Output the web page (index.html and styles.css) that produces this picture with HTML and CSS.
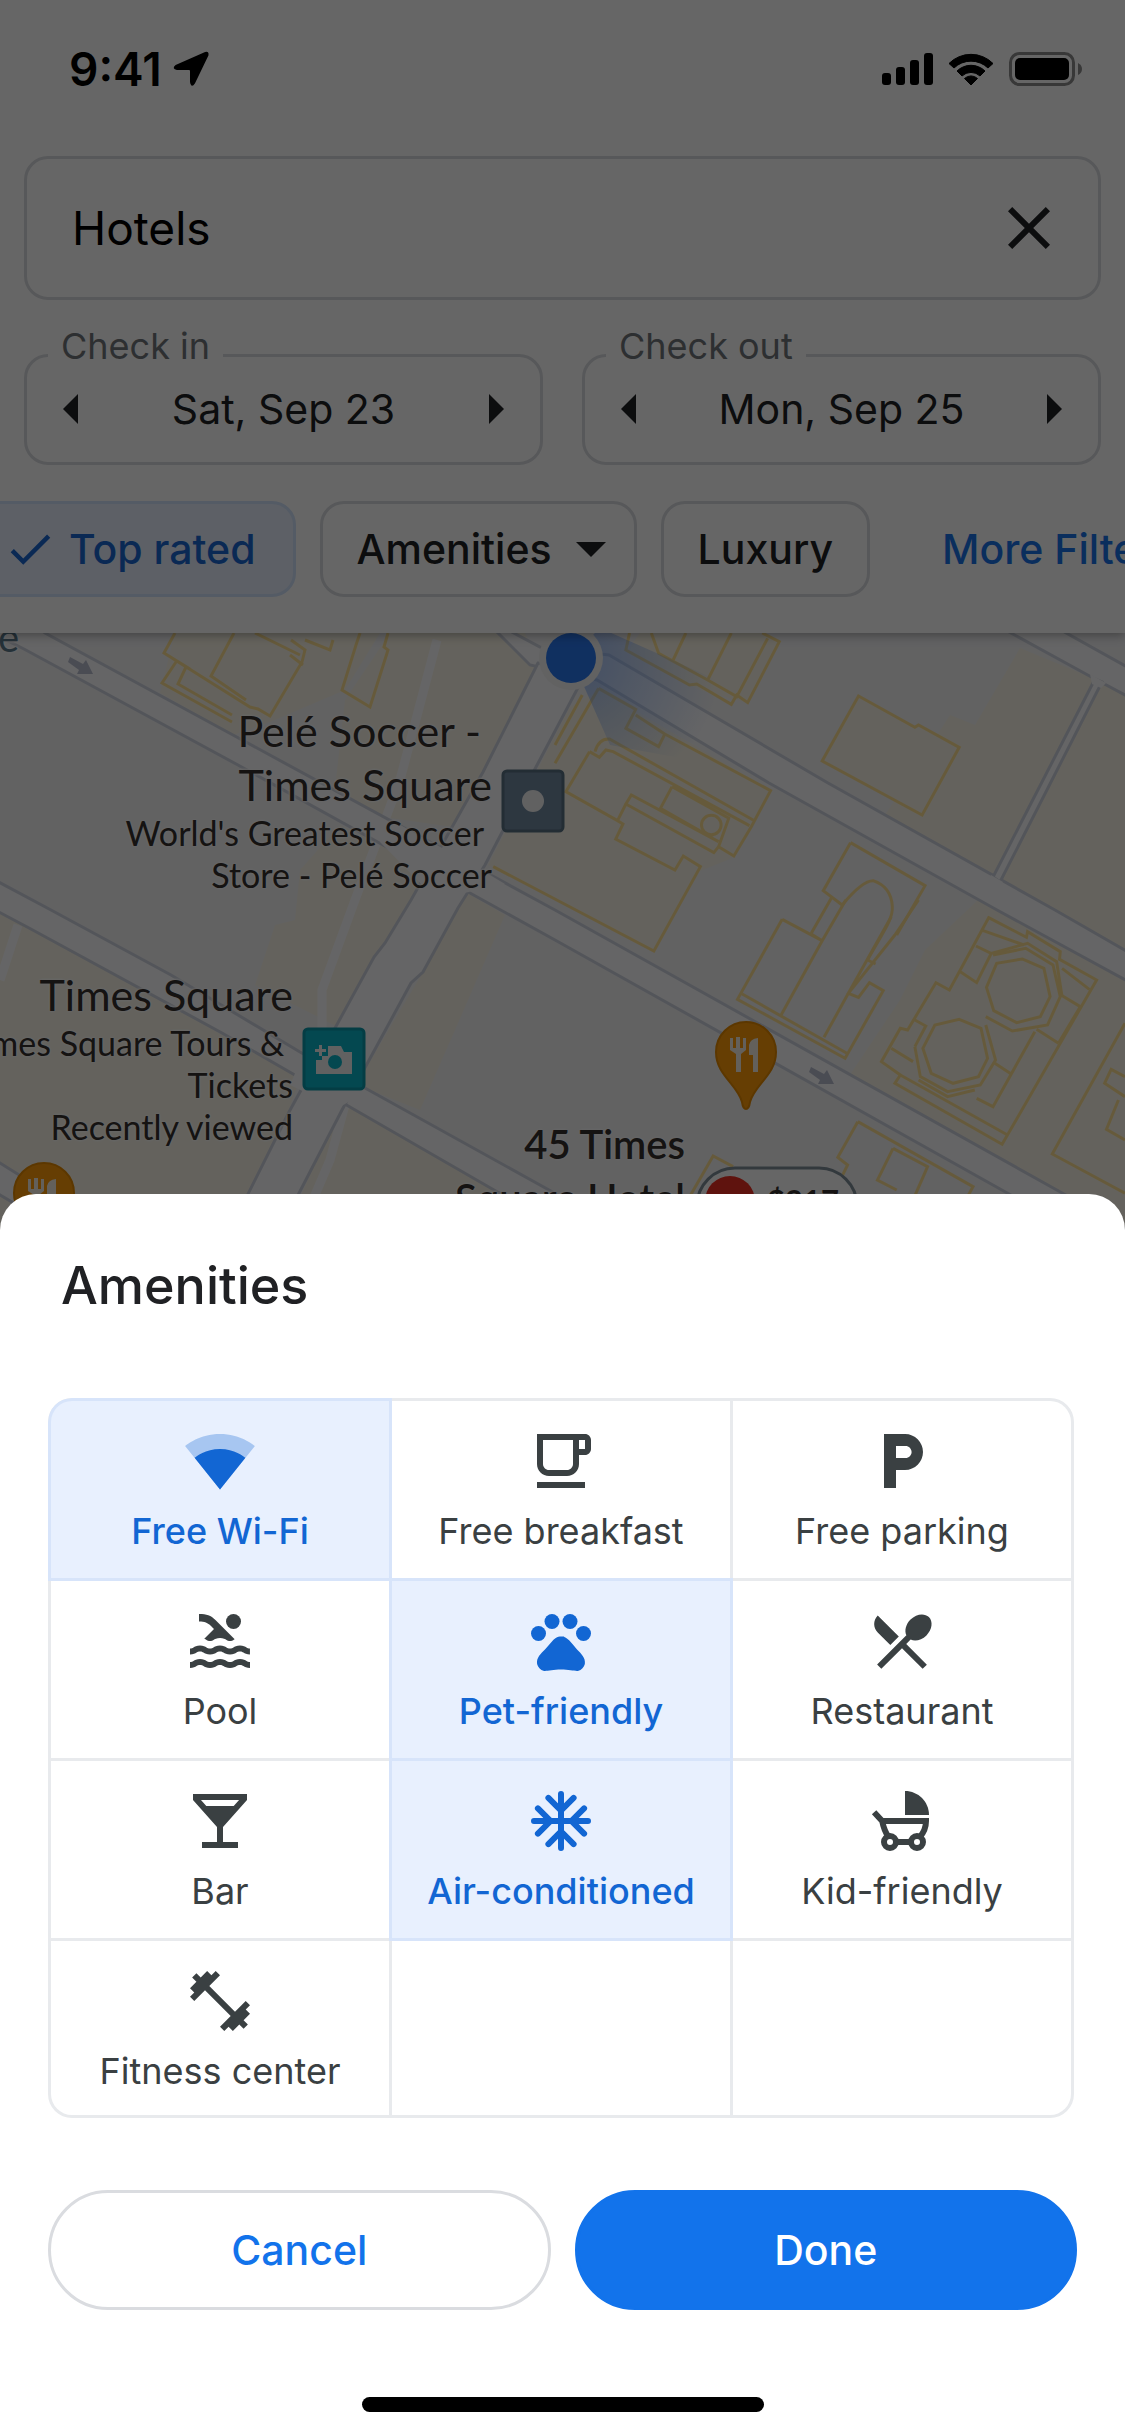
FILE: index.html
```html
<!DOCTYPE html>
<html lang="en">
<head>
<meta charset="utf-8">
<meta name="viewport" content="width=device-width, initial-scale=1">
<title>Hotels – Amenities</title>
<link rel="stylesheet" href="styles.css">
</head>
<body>
<div class="screen">
  <div class="backdrop">
    <header class="header">
      <div class="status">
        <div class="status-time">
          <span>9:41</span>
          <svg class="status-arrow" viewBox="0 0 36 36"><path stroke="#000" stroke-width="2" stroke-linejoin="round" d="M32.500 2Q35 1 34.500 4L21 32Q18.500 36 18 31V20Q18 18 16 18H4Q0 17.500 3 15Z"/></svg>
        </div>
        <div class="status-icons">
          <svg width="51" height="34" viewBox="0 0 51 34"><rect y="21" width="9" height="12" rx="3"/><rect x="14" y="15" width="9" height="18" rx="3"/><rect x="28" y="8" width="9" height="25" rx="3"/><rect x="42" y="1" width="9" height="32" rx="3"/></svg>
          <svg width="46" height="34" viewBox="0 0 46 34"><path d="M1 11.500A31 31 0 0 1 45 11.500L40 16A24.500 24.500 0 0 0 6 16ZM9 19A20 20 0 0 1 37 19L32 24A13 13 0 0 0 14 24ZM16.500 26.500A9.500 9.500 0 0 1 29.500 26.500L23 33Z" stroke="#000" stroke-linejoin="round"/></svg>
          <svg width="74" height="34" viewBox="0 0 74 34"><rect x="1.500" y="1.500" width="63" height="31" rx="9" fill="none" stroke="#000" stroke-opacity=".45" stroke-width="3"/><rect x="6" y="6" width="54" height="22" rx="5"/><path d="M69 11Q73 13 73 17T69 23Z" opacity=".45"/></svg>
        </div>
      </div>

      <form class="search">
        <input class="search-input" type="text" value="Hotels" aria-label="Search">
        <button class="plain" type="button" aria-label="Clear search">
          <svg class="icon" viewBox="0 0 24 24"><path d="M19 6.410L17.590 5 12 10.590 6.410 5 5 6.410 10.590 12 5 17.590 6.410 19 12 13.410 17.590 19 19 17.590 13.410 12z"/></svg>
        </button>
      </form>

      <div class="dates">
        <fieldset class="date">
          <legend>Check in</legend>
          <div class="date-row">
            <button class="plain" type="button" aria-label="Previous check-in day"><svg class="tri" viewBox="0 0 15 30"><path d="M15 0V30L0 15Z"/></svg></button>
            <span>Sat, Sep 23</span>
            <button class="plain" type="button" aria-label="Next check-in day"><svg class="tri" viewBox="0 0 15 30"><path d="M0 0V30L15 15Z"/></svg></button>
          </div>
        </fieldset>
        <fieldset class="date">
          <legend>Check out</legend>
          <div class="date-row">
            <button class="plain" type="button" aria-label="Previous check-out day"><svg class="tri" viewBox="0 0 15 30"><path d="M15 0V30L0 15Z"/></svg></button>
            <span>Mon, Sep 25</span>
            <button class="plain" type="button" aria-label="Next check-out day"><svg class="tri" viewBox="0 0 15 30"><path d="M0 0V30L15 15Z"/></svg></button>
          </div>
        </fieldset>
      </div>

      <div class="chips">
        <button class="chip chip-on" type="button"><svg class="chip-check" viewBox="0 0 24 24"><path d="M9 16.170L4.830 12l-1.420 1.410L9 19 21 7l-1.410-1.410z"/></svg>Top rated</button>
        <button class="chip chip-menu" type="button">Amenities<svg class="chip-caret" viewBox="0 0 30 15"><path d="M0 0H30L15 15Z"/></svg></button>
        <button class="chip" type="button">Luxury</button>
        <a class="more" href="#filters">More Filters</a>
      </div>
    </header>

    <div class="map">
      <svg class="map-art" viewBox="0 633 1125 597" preserveAspectRatio="xMidYMin slice" aria-hidden="true">
        <defs>
          <radialGradient id="beam" gradientUnits="userSpaceOnUse" cx="571" cy="657" r="150">
            <stop offset="0" stop-color="#5b93f5" stop-opacity=".55"/>
            <stop offset="1" stop-color="#5b93f5" stop-opacity="0"/>
          </radialGradient>
        </defs>
        <rect y="633" width="1125" height="597" fill="#f4f4f6"/>
        <!-- commercial areas -->
        <g fill="#fbf6e8">
          <path d="M1102 682L1125 695V950L1000 882ZM1020 648L1095 679 993 877 885 815 950 715 975 725ZM390 633H525L538 663 453 827 383 817 335 788 345 700ZM340 825L427 868 411 900 338 1027 255 985 275 925 295 920 300 870ZM0 912L300 1078 247 1230H0ZM467 893L505 915 455 1030 420 1110 365 1088V1070L423 972ZM343 1103L494 1190 550 1230H285ZM978 900L1125 980V1230H1100L850 1075 900 1000 925 950Z"/>
          <path d="M175 633H380L345 690 270 722 233 735 160 693ZM0 633H20L0 625Z"/>
          <path d="M640 633H760L780 642 748 703 700 690 626 652ZM600 690L770 790 735 857 700 871 654 951 488 865 570 707Z"/>
        </g>
        <!-- footpaths -->
        <g fill="none" stroke="#fdfdff" stroke-width="9">
          <path d="M437 640L400 780 355 900 322 990V1030M18 925L0 980M345 1105L330 1160 300 1230"/>
        </g>
        <!-- streets -->
        <g fill="#fcfcfe" stroke="#d0d5e0" stroke-width="3">
          <path d="M0 600L45 633 233 735 555 910 1064 1194 1150 1242 1090 1239 1009 1194 555 940 238 765 24 649 -10 632Z"/>
          <path d="M480 615L540 647 609 655 828 783 1055 910 1140 959V988L997 910 769 783 597 680 530 665Z"/>
          <path d="M1050 624L1140 674V703L1095 679 1000 627Z"/>
          <path d="M1095 679L993 877 1000 882 1102 682Z"/>
          <path d="M-5 880L51 910 171 975 300 1052 365 1088 549 1190 620 1230H565L494 1190 343 1103 300 1078 222 1033 29 928 -5 910Z"/>
          <path d="M-5 1160L16 1173 110 1230H60L-5 1192Z"/>
          <path d="M538 663L483 772 411 900 385 943 374 957 289 1112 230 1230H280L342 1110 411 983 423 972 458 908 485 865 536 767 590 665Z"/>
        </g>
        <!-- junctions -->
        <g fill="#fcfcfe">
          <path d="M395 822L420 836 470 863 505 884 455 895 425 888 380 842ZM305 1050L350 1078 366 1092 338 1108 290 1085ZM536 650L600 655 600 678 545 680ZM1090 674L1106 683 1101 688 1092 684ZM991 875L1003 882 999 887 989 880Z"/>
        </g>
        <!-- building outlines -->
        <g fill="none" stroke="#ffe294" stroke-width="3">
          <path d="M175 633L164 653 250 707 258 709 270 716 302 662 305 650 291 640M234 633L211 676 246 700M176 662L162 683 232 722M186 667L178 684 232 715M164 653L190 669M255 633L300 655M290 655L303 665M305 640L330 650 333 640M360 633L356 645 342 690 370 707 388 650 384 647 388 633"/>
          <g transform="translate(555 620) scale(.3635 .3333)">
            <path vector-effect="non-scaling-stroke" d="M205 39L195 90 370 195 390 192 485 253 500 225 530 248 617 65 570 39M265 39L285 100 420 180 500 230 585 55M360 39L325 120M485 39L420 180"/>
            <path vector-effect="non-scaling-stroke" d="M835 228L990 322 1000 315 1112 382 1010 585 735 423Z" fill="#fbf6e8"/>
            <path vector-effect="non-scaling-stroke" d="M120 205L222 268 195 325 285 380 302 342 593 512 540 620 492 708 450 680 437 698 195 552 210 525 450 665M222 285L302 342M120 205L0 430M75 225L0 375M110 395Q120 355 150 357L545 600M95 395L122 412 140 390 160 395 535 617M95 395L30 515 172 602 187 612 167 657 330 750 353 708 400 740 272 993 -170 740M195 552L172 602M322 500L290 565 435 655M322 500L478 595 450 680"/>
            <ellipse vector-effect="non-scaling-stroke" cx="430" cy="615" rx="27" ry="29"/>
            <path vector-effect="non-scaling-stroke" d="M813 668L1018 797 940 945M813 668L738 812 790 855M760 835L705 940M790 855Q845 782 875 782 925 800 928 860C930 900 900 940 860 1020"/>
          </g>
          <g transform="translate(555 900) scale(.3635 .3333)">
            <path vector-effect="non-scaling-stroke" d="M625 58L735 122 800 0M625 58L502 298 798 475 903 272 865 248 835 292 807 280 935 105 1000 0M515 282L803 460M735 122L622 345M705 102L735 122M740 412L807 280 925 50M860 180L882 192"/>
            <path vector-effect="non-scaling-stroke" d="M1193 53L1297 112 1300 95 1390 155 1388 178 1490 240 1230 733 935 550 950 525 898 485 950 385 970 390 1048 248 1085 270ZM1178 92L1290 135M1158 138L1200 160 1160 248 1115 215M1395 205L1470 268M1392 285L1445 320M1325 388L1385 430M1385 430L1445 320M1210 490L1252 520M1320 395L1205 620 1160 595M925 445L985 485M990 360L1020 378 990 440M950 525L1245 705"/>
            <path vector-effect="non-scaling-stroke" d="M1285 177L1345 205 1362 290 1335 350 1270 368 1207 332 1187 262 1215 190ZM1205 165L1295 145 1370 195 1390 290 1355 375 1258 393 1185 350M1200 160L1300 130 1380 185 1395 290"/>
            <path vector-effect="non-scaling-stroke" d="M1112 358L1172 385 1190 475 1165 530 1095 550 1035 520 1012 445 1045 375ZM1185 375L1212 480 1170 555 1080 575 1005 530 990 440M1155 570L1080 590 1000 540"/>
            <path vector-effect="non-scaling-stroke" d="M1568 370L1368 762 1568 880M1568 530L1530 508 1512 550 1568 590M1550 600L1517 688 1568 720M833 665L1150 860 1130 900M833 665L778 772 805 795 780 850M930 745L1025 800 985 900M930 745L887 840 940 870M360 910L435 768 490 800"/>
          </g>
        </g>
        <!-- one-way arrows -->
        <path id="oneway" d="M70 657L83 664 86 660 93 674 77 674 79 670 68 662Z" fill="#b9bed0"/>
        <use href="#oneway" x="741" y="410"/>
        <!-- current location -->
        <path d="M571 657L600 628 740 690 690 760 610 745Z" fill="url(#beam)"/>
        <circle cx="571" cy="658" r="32" fill="#f4f4f4"/>
        <circle cx="571" cy="658" r="25" fill="#2a78f0"/>
        <!-- place markers -->
        <rect x="503" y="771" width="60" height="60" rx="4" fill="#7089a0" stroke="#587183" stroke-width="3"/>
        <circle cx="533" cy="801" r="11" fill="#f2f2f2"/>
        <rect x="304" y="1029" width="60" height="60" rx="4" fill="#0cb4c8" stroke="#0a98aa" stroke-width="3"/>
        <path d="M328 1046H341L344 1052H352V1074H316V1060H322V1056H328ZM319 1045H322V1049H326V1052H322V1056H319V1052H315V1049H319Z" fill="#f2f2f2"/>
        <circle cx="335" cy="1062" r="7" fill="#0cb4c8"/>
        <g id="food">
          <path d="M746 1109Q743 1109 742 1102C737 1084 716 1075 716 1052A30 30 0 0 1 776 1052C776 1075 755 1084 750 1102Q749 1109 746 1109Z" fill="#ff9c08" stroke="#e58a00" stroke-width="2"/>
          <path d="M730 1038H733V1048H736V1037H740V1048H743V1038H746V1050L741 1054V1072H736V1054L730 1050ZM758 1038V1072H753V1055H749V1045Q750 1039 758 1038Z" fill="#f7f0e4"/>
        </g>
        <use href="#food" x="-702" y="141"/>
        <rect x="697" y="1168" width="160" height="76" rx="38" fill="#fff" stroke="#80909a" stroke-width="3"/>
        <circle cx="730" cy="1201" r="25" fill="#ee3124"/>
      </svg>
      <span class="place street">e</span>
      <div class="place place-pele"><b>Pelé Soccer -&nbsp;<br>Times Square</b><span>World's Greatest Soccer&nbsp;<br>Store - Pelé Soccer</span></div>
      <div class="place place-times"><b>Times Square</b><span>Times Square Tours &amp;&nbsp;<br>Tickets<br>Recently viewed</span></div>
      <div class="place place-hotel">45 Times<br>Square Hotel</div>
      <span class="place price">$217</span>
    </div>
  </div>

  <main class="sheet">
    <h1 class="title">Amenities</h1>
    <form>
      <div class="grid">
        <label class="cell"><input type="checkbox" checked><svg class="icon" viewBox="0 0 24 24"><path opacity=".3" d="M12.010 21.490L23.640 7c-.45-.34-4.930-4-11.640-4C5.280 3 .81 6.660.36 7l11.630 14.490.01.01.01-.01z"/><path d="M3.530 10.950l8.460 10.540.01.01.01-.01 8.460-10.540C20.040 10.620 16.810 8 12 8c-4.810 0-8.040 2.620-8.470 2.950z"/></svg><span>Free Wi-Fi</span></label>
        <label class="cell"><input type="checkbox"><svg class="icon" viewBox="0 0 24 24"><path fill-rule="evenodd" d="M4 3H20C21.110 3 22 3.890 22 5V8C22 9.100 21.110 10 20 10H18V13C18 15.210 16.210 17 14 17H8C5.790 17 4 15.210 4 13ZM6 5V13C6 14.100 6.900 15 8 15H14C15.100 15 16 14.100 16 13V5ZM18 5V8H20V5ZM4 19H20V21H4Z"/></svg><span>Free breakfast</span></label>
        <label class="cell"><input type="checkbox"><svg class="icon" viewBox="0 0 24 24"><path d="M13 3H6v18h4v-6h3c3.310 0 6-2.690 6-6s-2.690-6-6-6zm.2 8H10V7h3.200c1.100 0 2 .9 2 2s-.9 2-2 2z"/></svg><span>Free parking</span></label>
        <label class="cell"><input type="checkbox"><svg class="icon" viewBox="0 0 24 24"><path d="M22 21c-1.110 0-1.730-.37-2.180-.64-.37-.22-.6-.36-1.150-.36-.56 0-.78.13-1.150.36-.46.27-1.070.64-2.180.64s-1.730-.37-2.180-.64c-.37-.22-.6-.36-1.150-.36-.56 0-.78.13-1.150.36-.46.27-1.080.64-2.190.64-1.110 0-1.730-.37-2.180-.64-.37-.23-.6-.36-1.150-.36s-.78.13-1.150.36c-.46.27-1.080.64-2.190.64v-2c.56 0 .78-.13 1.150-.36.46-.27 1.080-.64 2.190-.64s1.730.37 2.180.64c.37.23.59.36 1.150.36.56 0 .78-.13 1.150-.36.46-.27 1.080-.64 2.190-.64 1.110 0 1.730.37 2.180.64.37.22.6.36 1.150.36s.78-.13 1.150-.36c.45-.27 1.070-.64 2.180-.64s1.730.37 2.180.64c.37.23.59.36 1.150.36v2zm0-4.500c-1.110 0-1.730-.37-2.180-.64-.37-.22-.6-.36-1.150-.36-.56 0-.78.13-1.150.36-.45.27-1.070.64-2.180.64s-1.730-.37-2.180-.64c-.37-.22-.6-.36-1.150-.36-.56 0-.78.13-1.150.36-.45.27-1.070.64-2.180.64s-1.730-.37-2.180-.64c-.37-.22-.6-.36-1.150-.36s-.78.13-1.150.36c-.47.27-1.090.64-2.200.64v-2c.56 0 .78-.13 1.150-.36.45-.27 1.070-.64 2.180-.64s1.730.37 2.180.64c.37.22.6.36 1.150.36.56 0 .78-.13 1.150-.36.45-.27 1.070-.64 2.180-.64s1.730.37 2.180.64c.37.22.6.36 1.150.36s.78-.13 1.150-.36c.45-.27 1.070-.64 2.180-.64s1.730.37 2.180.64c.37.22.6.36 1.150.36v2zM8.670 12c.56 0 .78-.13 1.150-.36.46-.27 1.080-.64 2.190-.64 1.110 0 1.730.37 2.180.64.37.22.6.36 1.150.36s.78-.13 1.150-.36c.12-.07.26-.15.41-.23L10.480 5C8.930 3.450 7.500 2.990 5 3v2.500c1.820-.01 2.890.39 4 1.500l1 1-3.250 3.250c.31.12.56.27.77.39.37.23.59.36 1.150.36z"/><circle cx="16.500" cy="5.500" r="2.500"/></svg><span>Pool</span></label>
        <label class="cell"><input type="checkbox" checked><svg class="icon" viewBox="0 0 24 24"><circle cx="4.500" cy="9.500" r="2.500"/><circle cx="9" cy="5.500" r="2.500"/><circle cx="15" cy="5.500" r="2.500"/><circle cx="19.500" cy="9.500" r="2.500"/><path d="M17.340 14.860c-.87-1.020-1.600-1.890-2.480-2.910-.46-.54-1.050-1.080-1.750-1.320-.11-.04-.22-.07-.33-.09-.25-.04-.52-.04-.78-.04s-.53 0-.79.05c-.11.02-.22.05-.33.09-.7.24-1.280.78-1.750 1.320-.87 1.020-1.600 1.890-2.480 2.910-1.310 1.310-2.920 2.760-2.620 4.790.29 1.020 1.020 2.030 2.330 2.320.73.15 3.060-.44 5.540-.44h.18c2.480 0 4.810.58 5.540.44 1.310-.29 2.040-1.310 2.330-2.320.31-2.040-1.300-3.490-2.610-4.800z"/></svg><span>Pet-friendly</span></label>
        <label class="cell"><input type="checkbox"><svg class="icon" viewBox="0 0 24 24"><path d="M8.100 13.340l2.830-2.830L3.910 3.500c-1.560 1.560-1.560 4.090 0 5.660l4.190 4.180zm6.780-1.810c1.530.71 3.680.21 5.270-1.380 1.910-1.910 2.280-4.650.81-6.120-1.460-1.460-4.200-1.100-6.120.81-1.590 1.590-2.090 3.740-1.380 5.270L3.700 19.870l1.410 1.410L12 14.410l6.880 6.880 1.410-1.410L13.410 13l1.470-1.470z"/></svg><span>Restaurant</span></label>
        <label class="cell"><input type="checkbox"><svg class="icon" viewBox="0 0 24 24"><path d="M21 5V3H3v2l8 9v5H6v2h12v-2h-5v-5l8-9zM7.430 7L5.660 5h12.690l-1.780 2H7.430z"/></svg><span>Bar</span></label>
        <label class="cell"><input type="checkbox" checked><svg class="icon icon-line" viewBox="0 0 24 24"><path stroke-linecap="round" d="M12 3V21M3 12H21M7.800 4.300L12 8.500 16.200 4.300M7.800 19.700L12 15.500 16.200 19.700M4.300 7.800L8.500 12 4.300 16.200M19.700 7.800L15.500 12 19.700 16.200"/></svg><span>Air-conditioned</span></label>
        <label class="cell"><input type="checkbox"><svg class="icon" viewBox="0 0 24 24"><path d="M13 2C17.420 2 21 5.580 21 10H13Z"/><g class="icon-line"><path d="M2.700 9.100L5.400 12H20C20 14.200 19.200 16 17.800 17.500M5.400 12C5.800 14.200 6.600 16 7.600 17.500M10 19H15"/><circle cx="8" cy="19" r="2"/><circle cx="17" cy="19" r="2"/></g></svg><span>Kid-friendly</span></label>
        <label class="cell"><input type="checkbox"><svg class="icon" viewBox="0 0 24 24"><path d="M20.570 14.860L22 13.430 20.570 12 17 15.570 8.430 7 12 3.430 10.570 2 9.140 3.430 7.710 2 5.570 4.140 4.140 2.710 2.710 4.140l1.430 1.430L2 7.710l1.430 1.430L2 10.570 3.430 12 7 8.430 15.570 17 12 20.570 13.430 22l1.430-1.430L16.290 22l2.140-2.140 1.430 1.430 1.430-1.430-1.430-1.430L22 16.290z"/></svg><span>Fitness center</span></label>
        <div class="cell"></div>
        <div class="cell"></div>
      </div>
      <div class="actions">
        <button class="btn" type="button">Cancel</button>
        <button class="btn btn-primary" type="submit">Done</button>
      </div>
    </form>
    <div class="home-bar"></div>
  </main>
</div>
</body>
</html>
```
FILE: styles.css
```css
* { box-sizing: border-box; }

body {
  margin: 0;
  background: #fff;
  color: #202124;
  font-family: Inter, "Liberation Sans", sans-serif;
}

button, input {
  font: inherit;
  color: inherit;
}

svg {
  display: block;
  flex: none;
  fill: currentColor;
}

.plain {
  display: flex;
  padding: 0;
  border: 0;
  background: none;
}

.icon {
  width: 72px;
  height: 72px;
}

.icon-line {
  fill: none;
  stroke: currentColor;
  stroke-width: 2;
}

.screen {
  display: flex;
  flex-direction: column;
  min-height: 100vh;
}

/* Page behind the sheet, dimmed by a scrim */
.backdrop {
  position: relative;
  display: flex;
  flex: 1;
  flex-direction: column;
  overflow: hidden;
}

.backdrop::after {
  content: "";
  position: absolute;
  z-index: 2;
  inset: 0;
  background: rgba(0, 0, 0, .6);
}

.header {
  position: relative;
  z-index: 1;
  padding: 0 24px 36px;
  background: #fff;
  box-shadow: 0 2px 10px rgba(0, 0, 0, .35);
}

.status {
  display: flex;
  justify-content: space-between;
  align-items: center;
  height: 156px;
  padding: 0 18px 18px 45px;
  color: #000;
}

.status-time {
  display: flex;
  align-items: center;
  gap: 11px;
  font-size: 46px;
  font-weight: 600;
}

.status-arrow {
  width: 36px;
  height: 36px;
}

.status-icons {
  display: flex;
  gap: 15px;
}

.search {
  display: flex;
  align-items: center;
  height: 144px;
  padding: 0 33px 0 45px;
  border: 3px solid #dadce0;
  border-radius: 24px;
}

.search-input {
  flex: 1;
  min-width: 0;
  padding: 0;
  border: 0;
  outline: 0;
  background: none;
  color: #000;
  font-size: 46px;
}

.dates {
  display: grid;
  grid-template-columns: 1fr 1fr;
  gap: 39px;
  margin-top: 28px;
}

.date {
  min-width: 0;
  margin: 0;
  padding: 0 36px 26px;
  border: 3px solid #dadce0;
  border-radius: 24px;
}

.date legend {
  margin-left: -15px;
  padding: 0 13px 18px;
  color: #70757a;
  font-size: 36px;
  line-height: 36px;
}

.date-row {
  display: flex;
  justify-content: space-between;
  align-items: center;
  font-size: 41px;
  line-height: 54px;
}

.tri {
  width: 15px;
  height: 30px;
}

.chips {
  display: flex;
  align-items: center;
  gap: 24px;
  margin: 36px -24px 0;
  overflow: hidden;
  font-size: 41px;
  font-weight: 500;
  white-space: nowrap;
}

.chip {
  display: flex;
  flex: none;
  align-items: center;
  height: 96px;
  padding: 0 34px;
  border: 3px solid #dadce0;
  border-radius: 24px;
  background: #fff;
}

.chip-on {
  gap: 12px;
  margin-left: -34px;
  padding-right: 37px;
  border-color: #d2e3fc;
  background: #e8f0fe;
  color: #1967d2;
}

.chip-menu {
  padding-right: 28px;
}

.chip-check {
  width: 54px;
  height: 54px;
}

.chip-caret {
  width: 30px;
  height: 15px;
  margin-left: 24px;
}

.more {
  margin-left: 48px;
  color: #1a73e8;
  text-decoration: none;
}

.map {
  position: relative;
  flex: 1;
  overflow: hidden;
}

.map-art {
  position: absolute;
  inset: 0;
  width: 100%;
  height: 100%;
}

.place {
  position: absolute;
  color: #35302e;
  font-family: Lato, "Open Sans", sans-serif;
  text-align: right;
  white-space: nowrap;
  text-shadow: 0 0 3px #fff, 0 0 3px #fff, 0 0 3px #fff;
}

.place b {
  display: block;
  font-size: 43px;
  font-weight: 400;
  line-height: 54px;
}

.place span {
  display: block;
  font-size: 34px;
  line-height: 42px;
}

.place-pele { top: 71px; right: 633px; }
.place-times { top: 335px; right: 832px; }

.place-hotel {
  top: 484px;
  right: 440px;
  font-size: 40px;
  font-weight: 600;
  line-height: 54px;
}

.street {
  top: -20px;
  left: -2px;
  color: #5c7a8c;
  font-size: 40px;
}

.price {
  top: 548px;
  left: 767px;
  font-size: 31px;
  font-weight: 700;
}

/* Amenities sheet */
.sheet {
  position: relative;
  z-index: 3;
  margin-top: -36px;
  padding: 60px 48px 24px;
  border-radius: 36px 36px 0 0;
  background: #fff;
}

.title {
  margin: 0 13px 80px;
  font-size: 52px;
  font-weight: 500;
  line-height: 64px;
}

.grid {
  display: grid;
  grid-template-rows: repeat(3, 177px) 174px;
  grid-template-columns: repeat(3, 1fr);
  gap: 3px;
  margin-right: 3px;
  padding: 3px;
  overflow: hidden;
  border-radius: 24px;
  background: #e8eaed;
}

.cell {
  position: relative;
  display: flex;
  flex-direction: column;
  align-items: center;
  gap: 12px;
  padding-top: 24px;
  background: #fff;
  color: #3a4042;
  font-size: 36px;
  line-height: 44px;
}

.cell:nth-child(1) { border-top-left-radius: 21px; }
.cell:nth-child(3) { border-top-right-radius: 21px; }
.cell:nth-child(10) { border-bottom-left-radius: 21px; }
.cell:nth-child(12) { border-bottom-right-radius: 21px; }

.cell input {
  position: absolute;
  inset: 0;
  margin: 0;
  opacity: 0;
}

.cell:has(:checked) {
  background: #e8f0fe;
  box-shadow: 0 0 0 3px #d7e4fa;
  color: #1266d3;
  font-weight: 500;
}

.actions {
  display: grid;
  grid-template-columns: 1fr 1fr;
  gap: 24px;
  margin-top: 72px;
}

.btn {
  height: 120px;
  border: 3px solid #dadce0;
  border-radius: 60px;
  background: #fff;
  color: #1273eb;
  font-size: 41px;
  font-weight: 500;
}

.btn-primary {
  border-color: #1273eb;
  background: #1273eb;
  color: #fff;
}

.home-bar {
  width: 402px;
  max-width: 40%;
  height: 15px;
  margin: 87px auto 0;
  border-radius: 8px;
  background: #000;
}
```
